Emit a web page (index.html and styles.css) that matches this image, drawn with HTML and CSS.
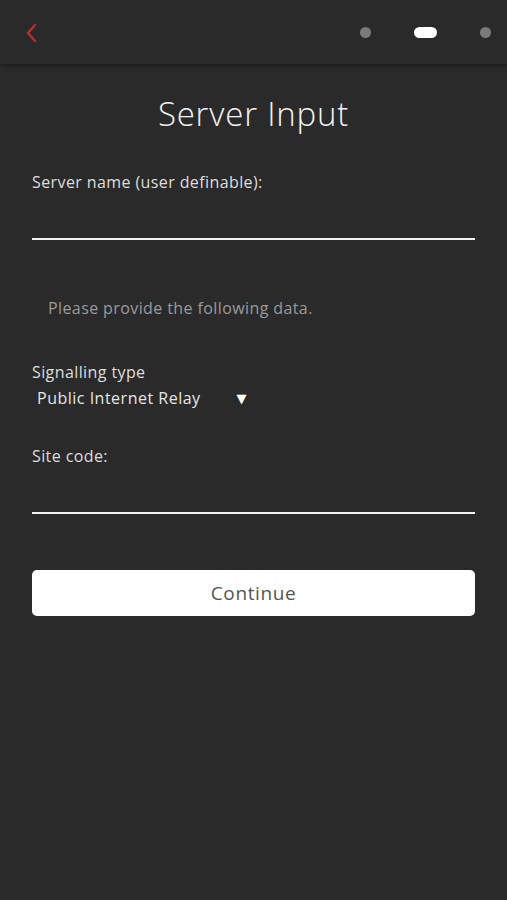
FILE: index.html
```html
<!DOCTYPE html>
<html lang="en">
<head>
  <meta charset="UTF-8">
  <meta name="viewport" content="width=device-width, initial-scale=1.0">
  <title>Server Input</title>
  <link rel="stylesheet" href="styles.css">
</head>
<body>
  <header class="top-bar">
    <button class="btn-back" aria-label="Back">
      <svg width="14" height="20" viewBox="0 0 14 20">
        <path d="M10 2 L3 10 L10 18" fill="none" stroke="#b3312e" stroke-width="2.4" stroke-linecap="round" stroke-linejoin="round"/>
      </svg>
    </button>
    <div class="steps">
      <span class="step"></span>
      <span class="step active"></span>
      <span class="step"></span>
    </div>
  </header>

  <main class="content">
    <h1>Server Input</h1>

    <div class="field">
      <label for="serverName">Server name (user definable):</label>
      <input type="text" id="serverName">
    </div>

    <p class="hint">Please provide the following data.</p>

    <div class="field select-field">
      <label>Signalling type</label>
      <div class="select-value">
        <span>Public Internet Relay</span>
        <span class="arrow">&#9660;</span>
      </div>
    </div>

    <div class="field">
      <label for="siteCode">Site code:</label>
      <input type="text" id="siteCode">
    </div>

    <button class="btn-continue">Continue</button>
  </main>
</body>
</html>
```

FILE: styles.css
```css
/* page */
body {
  margin: 0;
  background-color: #2a2a2a;
  color: #e6e6e6;
  font-family: "Open Sans", "DejaVu Sans", sans-serif;
  height: 900px;
}

/* top bar */
.top-bar {
  height: 64px;
  display: flex;
  align-items: center;
  justify-content: space-between;
  padding: 0 16px 0 25px;
  box-shadow: 0 2px 4px rgba(0, 0, 0, 0.35);
  background-color: #2a2a2a;
}

.btn-back {
  background: none;
  border: none;
  padding: 0;
  margin-top: 2px;
  display: flex;
}

.steps {
  display: flex;
  align-items: center;
  gap: 43px;
}

.step {
  width: 11px;
  height: 11px;
  border-radius: 6px;
  background-color: #7a7a7a;
}

.step.active {
  width: 23px;
  background-color: #ffffff;
}

/* content */
.content {
  padding: 0 32px;
  display: flex;
  flex-direction: column;
}

h1 {
  margin: 27px 0 0;
  text-align: center;
  font-weight: 300;
  font-size: 33px;
  color: #f2f2f2;
  letter-spacing: 0.8px;
}

.field {
  display: flex;
  flex-direction: column;
}

.field label {
  font-size: 16px;
  letter-spacing: 0.4px;
  color: #dedede;
}

.field:nth-of-type(1) {
  margin-top: 35px;
}

.field input {
  background: none;
  border: none;
  border-bottom: 2.5px solid #f2f2f2;
  height: 39px;
  margin-top: 4px;
  outline: none;
  color: #fff;
}

.hint {
  margin: 57px 0 0 16px;
  font-size: 16px;
  letter-spacing: 0.4px;
  color: #9a9a9a;
}

.select-field {
  margin-top: 42px;
}

.select-value {
  display: flex;
  align-items: center;
  gap: 36px;
  padding-left: 5px;
  margin-top: 4px;
  font-size: 16px;
  letter-spacing: 0.5px;
}

.arrow {
  font-size: 13px;
  color: #fff;
}

.select-field + .field {
  margin-top: 36px;
}

.btn-continue {
  margin-top: 56px;
  height: 46px;
  border: none;
  border-radius: 5px;
  background-color: #ffffff;
  color: #555555;
  font-family: inherit;
  font-size: 19px;
  letter-spacing: 0.6px;
}
```
